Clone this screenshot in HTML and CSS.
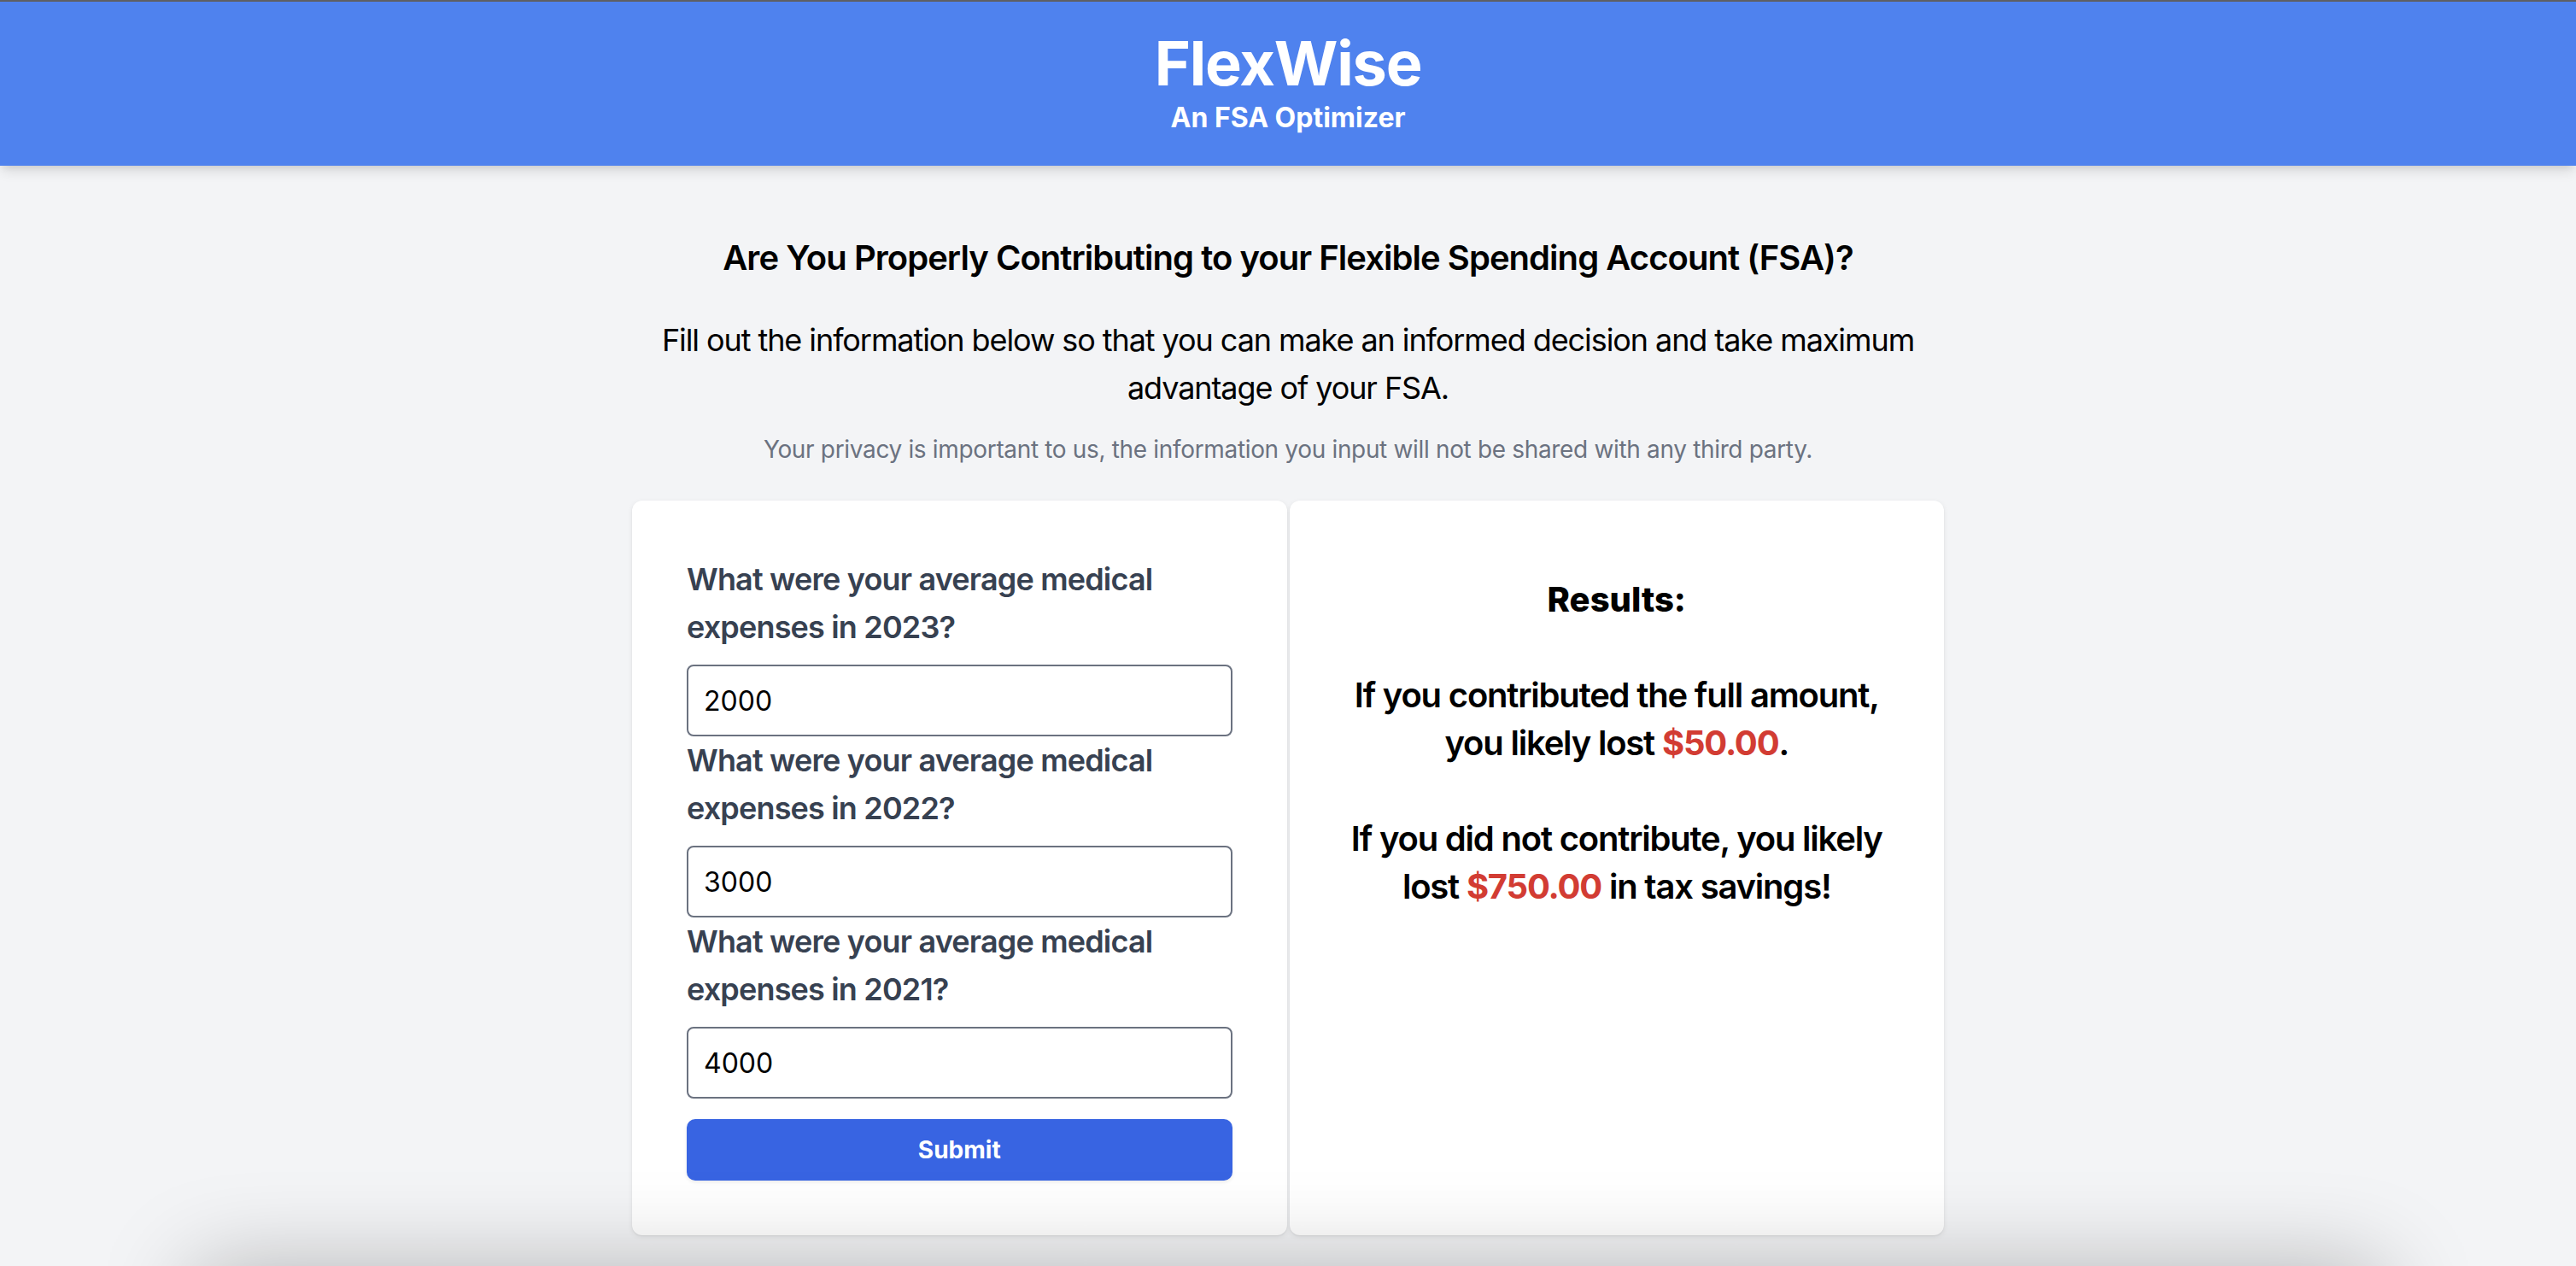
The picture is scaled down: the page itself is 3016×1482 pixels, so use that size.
FILE: index.html
```html
<!DOCTYPE html>
<html lang="en">
<head>
<meta charset="utf-8">
<title>FlexWise - An FSA Optimizer</title>
<link rel="stylesheet" href="styles.css">
</head>
<body>
<div class="page">
  <header class="topbar">
    <h1 class="brand">FlexWise</h1>
    <p class="tagline">An FSA Optimizer</p>
  </header>
  <main class="main">
    <h2 class="question">Are You Properly Contributing to your Flexible Spending Account (FSA)?</h2>
    <p class="intro">Fill out the information below so that you can make an informed decision and take maximum advantage of your FSA.</p>
    <p class="privacy">Your privacy is important to us, the information you input will not be shared with any third party.</p>
    <section class="panels">
      <form class="card form-card">
        <label class="field-label" for="y2023">What were your average medical expenses in 2023?</label>
        <input class="field-input" id="y2023" type="text" value="2000">
        <label class="field-label" for="y2022">What were your average medical expenses in 2022?</label>
        <input class="field-input" id="y2022" type="text" value="3000">
        <label class="field-label" for="y2021">What were your average medical expenses in 2021?</label>
        <input class="field-input" id="y2021" type="text" value="4000">
        <button class="submit" type="button">Submit</button>
      </form>
      <div class="card results-card">
        <h3 class="results-title">Results:</h3>
        <p class="results-text">If you contributed the full amount, you likely lost <span class="amount">$50.00</span>.</p>
        <p class="results-text">If you did not contribute, you likely lost <span class="amount">$750.00</span> in tax savings!</p>
      </div>
    </section>
  </main>
  <footer class="footer"></footer>
</div>
</body>
</html>
```
FILE: styles.css
```css
* { box-sizing: border-box; }

html, body {
  margin: 0;
  padding: 0;
}

body {
  background: #f3f4f6;
  font-family: Inter, "Noto Sans", "DejaVu Sans", sans-serif;
  color: #000;
}

.page {
  height: 1482px;
  overflow: hidden;
  border-top: 2px solid #5e5f63;
  display: flex;
  flex-direction: column;
  align-items: center;
}

.topbar {
  align-self: stretch;
  background: #4f82ee;
  padding: 32px 0;
  text-align: center;
  color: #fff;
  box-shadow: 0 8px 14px -2px rgba(0, 0, 0, 0.12), 0 4px 8px -4px rgba(0, 0, 0, 0.1);
  position: relative;
  z-index: 2;
}

.brand {
  margin: 0;
  font-size: 72px;
  line-height: 80px;
  font-weight: 700;
  letter-spacing: -0.017em;
}

.tagline {
  margin: 0;
  font-size: 32px;
  line-height: 48px;
  font-weight: 700;
}

.main {
  width: 1536px;
  padding-top: 80px;
  display: flex;
  flex-direction: column;
  align-items: center;
  text-align: center;
}

.question {
  margin: 0;
  font-size: 40px;
  line-height: 56px;
  font-weight: 600;
  letter-spacing: -0.024em;
}

.intro {
  margin: 40px 0 0;
  font-size: 36px;
  line-height: 56px;
  font-weight: 400;
  letter-spacing: -0.03em;
}

.privacy {
  margin: 24px 0 0;
  font-size: 28px;
  line-height: 40px;
  color: #6b7280;
  letter-spacing: -0.012em;
}

.panels {
  margin-top: 40px;
  width: 100%;
  display: grid;
  grid-template-columns: 1fr 1fr;
  gap: 3px;
}

.card {
  background: #fff;
  border-radius: 12px;
  box-shadow: 0 2px 6px rgba(0, 0, 0, 0.08), 0 1px 2px rgba(0, 0, 0, 0.05);
  padding: 64px;
}

.form-card {
  display: flex;
  flex-direction: column;
  text-align: left;
}

.field-label {
  font-size: 36px;
  line-height: 56px;
  font-weight: 600;
  color: #374151;
  letter-spacing: -0.023em;
  margin-bottom: 16px;
}

.field-input {
  display: block;
  width: 100%;
  height: 84px;
  border: 2px solid #6b7280;
  border-radius: 8px;
  padding: 0 18px;
  font-family: Inter, "Noto Sans", sans-serif;
  font-size: 32px;
  color: #000;
  background: #fff;
  outline: none;
}

.submit {
  margin-top: 24px;
  height: 72px;
  width: 100%;
  border: 0;
  border-radius: 10px;
  background: #3864e2;
  color: #fff;
  font-family: Inter, "Noto Sans", sans-serif;
  font-size: 28px;
  line-height: 40px;
  font-weight: 700;
  box-shadow: 0 2px 4px rgba(0, 0, 0, 0.08);
}

.results-card {
  padding: 88px 56px 64px;
  display: flex;
  flex-direction: column;
  align-items: center;
}

.results-title {
  margin: 0 0 56px;
  font-size: 40px;
  line-height: 56px;
  font-weight: 800;
}

.results-text {
  margin: 0 0 56px;
  font-size: 40px;
  line-height: 56px;
  font-weight: 600;
  letter-spacing: -0.03em;
}

.amount {
  color: #d23c33;
  font-weight: 700;
}

.footer {
  flex: none;
  margin-top: 40px;
  width: 2560px;
  height: 200px;
  background: #f3f4f6;
  box-shadow: 0 0 110px rgba(0, 0, 0, 0.28);
  position: relative;
  z-index: 1;
}
```
